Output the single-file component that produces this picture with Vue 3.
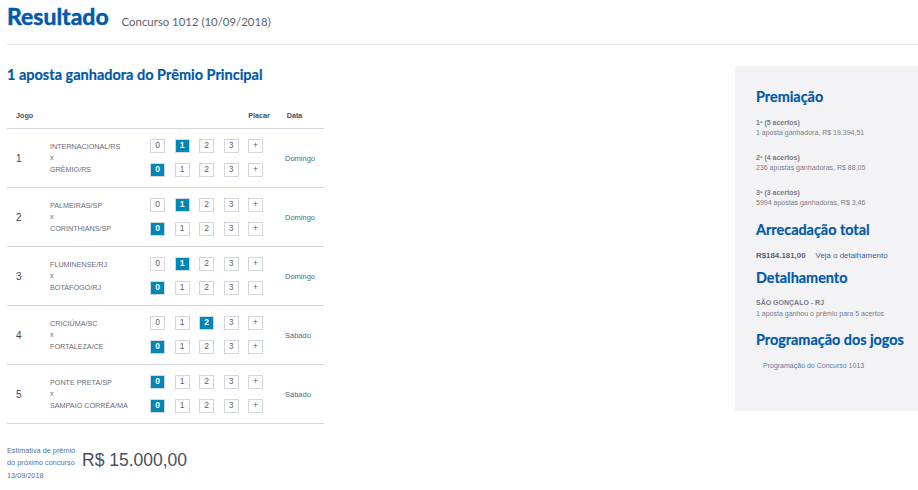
<script setup>
const games = [
  { n: 1, a: 'INTERNACIONAL/RS', b: 'GRÊMIO/RS', sa: 1, sb: 0, d: 'Domingo' },
  { n: 2, a: 'PALMEIRAS/SP', b: 'CORINTHIANS/SP', sa: 1, sb: 0, d: 'Domingo' },
  { n: 3, a: 'FLUMINENSE/RJ', b: 'BOTAFOGO/RJ', sa: 1, sb: 0, d: 'Domingo' },
  { n: 4, a: 'CRICIÚMA/SC', b: 'FORTALEZA/CE', sa: 2, sb: 0, d: 'Sábado' },
  { n: 5, a: 'PONTE PRETA/SP', b: 'SAMPAIO CORRÊA/MA', sa: 0, sb: 0, d: 'Sábado' },
]
const opts = ['0', '1', '2', '3', '+']
const prizes = [
  { t: '1º (5 acertos)', s: '1 aposta ganhadora, R$ 19.394,51' },
  { t: '2º (4 acertos)', s: '236 apostas ganhadoras, R$ 88,05' },
  { t: '3º (3 acertos)', s: '5994 apostas ganhadoras, R$ 3,46' },
]
</script>

<template>
  <div class="page">
    <header class="top">
      <h1>Resultado</h1>
      <span class="sub">Concurso 1012 (10/09/2018)</span>
    </header>
    <div class="cols">
      <main class="left">
        <h2 class="winners">1 aposta ganhadora do Prêmio Principal</h2>
        <div class="thead">
          <span class="th-jogo">Jogo</span>
          <span class="th-placar">Placar</span>
          <span class="th-data">Data</span>
        </div>
        <div v-for="g in games" :key="g.n" class="row">
          <span class="num">{{ g.n }}</span>
          <div class="teams">
            <span>{{ g.a }}</span>
            <span>x</span>
            <span>{{ g.b }}</span>
          </div>
          <div class="scores">
            <div class="line">
              <span v-for="o in opts" :key="o" class="box" :class="{ on: String(g.sa) === o }">{{ o }}</span>
            </div>
            <div class="line">
              <span v-for="o in opts" :key="o" class="box" :class="{ on: String(g.sb) === o }">{{ o }}</span>
            </div>
          </div>
          <span class="date">{{ g.d }}</span>
        </div>
        <div class="estimate">
          <p>Estimativa de prêmio<br>do próximo concurso<br>13/09/2018</p>
          <strong>R$ 15.000,00</strong>
        </div>
      </main>
      <aside class="side">
        <h3 class="first">Premiação</h3>
        <div v-for="p in prizes" :key="p.t" class="prize">
          <b>{{ p.t }}</b>
          <span>{{ p.s }}</span>
        </div>
        <h3 class="arrec">Arrecadação total</h3>
        <div class="total"><b>R$184.181,00</b><a>Veja o detalhamento</a></div>
        <h3 class="det">Detalhamento</h3>
        <div class="prize city">
          <b>SÃO GONÇALO - RJ</b>
          <span>1 aposta ganhou o prêmio para 5 acertos</span>
        </div>
        <h3 class="prog">Programação dos jogos</h3>
        <a class="proglink">Programação do Concurso 1013</a>
      </aside>
    </div>
  </div>
</template>

<style>
html, body { margin: 0; background: #fff; overflow: hidden; }
</style>

<style scoped>
.page { width: 918px; height: 490px; font-family: "Liberation Sans", Arial, sans-serif; color: #6b6b75; overflow: hidden; }
.top { height: 44px; margin-left: 7px; border-bottom: 1px solid #e6e7eb; display: flex; align-items: flex-start; gap: 13px; }
h1 { margin: 0; font: 700 23px/33px Lato, sans-serif; color: #0059a8; -webkit-text-stroke: .5px #0059a8; }
.sub { font: 400 11.4px/16px Lato, sans-serif; color: #5a5f6b; margin-top: 14px; white-space: nowrap; }
.cols { display: flex; justify-content: space-between; padding-top: 21px; }
.left { margin-left: 7px; width: 317px; }
h2, h3 { margin: 0; font-family: Lato, sans-serif; font-weight: 700; color: #0059a8; -webkit-text-stroke: .2px #0059a8; }
.winners { font-size: 14.5px; line-height: 18px; margin-bottom: 26px; }
.thead { display: flex; height: 17px; padding-top: 1px; font-size: 7.2px; font-weight: 700; line-height: 10px; color: #4c4f5c; border-bottom: 1px solid #d3d6de; }
.th-jogo { margin-left: 9px; }
.th-placar { margin-left: 215px; }
.th-data { margin-left: 17px; }
.row { display: flex; align-items: center; height: 58px; border-bottom: 1px solid #d3d6de; }
.num { width: 43px; padding-left: 9px; box-sizing: border-box; font-size: 10px; color: #3f4452; }
.teams { width: 100px; display: flex; flex-direction: column; font-size: 7.2px; line-height: 11.4px; color: #6b6b75; }
.scores { display: flex; flex-direction: column; gap: 10px; width: 136px; }
.line { display: flex; gap: 9.5px; }
.box { width: 15px; height: 14px; box-sizing: border-box; border: 1px solid #d3d6de; font-size: 8.5px; line-height: 11px; text-align: center; color: #5f606c; background: #fff; }
.box.on { background: #0087b5; color: #fff; font-weight: 700; }
.date { font-size: 7.5px; color: #4f6a8a; margin-left: -1px; }
.estimate { display: flex; align-items: center; gap: 8px; margin-top: 21px; }
.estimate p { margin: 0; font-size: 7.3px; line-height: 12.4px; color: #5b7290; width: 67px; white-space: nowrap; }
.estimate strong { font-weight: 400; font-size: 17.5px; color: #47505f; padding-bottom: 7px; white-space: nowrap; }
.side { width: 183px; height: 345px; box-sizing: border-box; background: #f3f3f6; padding: 0 0 0 21px; }
.side h3 { font-size: 14.4px; line-height: 18px; }
.first { padding-top: 22px; margin-bottom: 12px !important; }
.prize { display: flex; flex-direction: column; font-size: 7px; line-height: 10px; margin-bottom: 15px; color: #7a7a86; }
.prize b { color: #7a7a86; }
.arrec { margin-top: -2px !important; margin-bottom: 12px !important; }
.total { font-size: 7.9px; line-height: 10px; display: flex; gap: 10px; margin-bottom: 8px; }
.total b { color: #5c5f6a; }
.total a { color: #3a5d92; }
.det { margin-bottom: 11px !important; }
.city { line-height: 10.5px; margin-bottom: 12px; }
.prog { margin-bottom: 12px !important; }
.proglink { display: block; margin-left: 7px; font-size: 7px; line-height: 10px; color: #5b7aa5; }
</style>
